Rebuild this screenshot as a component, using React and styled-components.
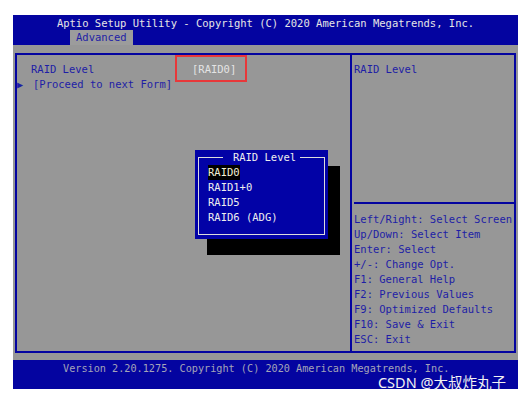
import React from 'react'
import styled, { createGlobalStyle } from 'styled-components'

const Global = createGlobalStyle`
    body {
        margin: 0;
        background: #ffffff;
        font-family: "DejaVu Sans Mono", "Liberation Mono", monospace;
    }
`

const BLUE = '#0404a0'
const GREY = '#979797'
const INK = '#1e1ea6'

const Page = styled.div`
    width: 526px;
    height: 398px;
    padding: 15px 8px 0 13px;
    box-sizing: border-box;
`

const Screen = styled.div`
    width: 505px;
    height: 374px;
    display: flex;
    flex-direction: column;
    background: ${GREY};
    font-size: 10.5px;
    position: relative;
`

const Header = styled.div`
    height: 30px;
    background: ${BLUE};
    display: flex;
    flex-direction: column;
`

Header.Title = styled.div`
    height: 15px;
    line-height: 16px;
    text-align: center;
    color: #e6e6e6;
    white-space: pre;
`

Header.Tabs = styled.div`
    display: flex;
    padding-left: 57px;
    margin-top: auto;
`

const Tab = styled.div`
    height: 15px;
    line-height: 15px;
    padding: 0 6px;
    background: ${props => props.active ? '#9c9c9c' : 'transparent'};
    color: ${props => props.active ? INK : '#e6e6e6'};
`

const Body = styled.div`
    flex: 1;
    padding: 8px 2px 7px 2px;
    display: flex;
`

const Frame = styled.div`
    flex: 1;
    display: flex;
    border: 2px solid ${BLUE};
`

const LeftPanel = styled.div`
    width: 333px;
    border-right: 2px solid ${BLUE};
    padding-top: 7px;
    color: ${INK};
`

const Row = styled.div`
    display: flex;
    height: 15px;
    line-height: 15px;
    white-space: pre;
`

Row.Label = styled.span`
    flex-shrink: 0;
    width: 175px;
    padding-left: ${props => props.indent}px;
    box-sizing: border-box;
`

Row.Value = styled.span`
    position: relative;
    color: #e4e4e4;

    &::after {
        content: '';
        position: absolute;
        left: -17px;
        right: -11px;
        top: -7px;
        bottom: -5px;
        border: 2px solid #e8383a;
    }
`

Row.Marker = styled.span`
    flex-shrink: 0;
    width: 16px;
    font-size: 10px;
    box-sizing: border-box;
`

const RightPanel = styled.div`
    flex: 1;
    display: flex;
    flex-direction: column;
    color: ${INK};
    padding-left: 2px;
`

RightPanel.Top = styled.div`
    height: 140px;
    padding-top: 7px;
    line-height: 15px;
    border-bottom: 2px solid ${BLUE};
`

RightPanel.Help = styled.div`
    padding-top: 8px;
    line-height: 15px;
    white-space: pre;
`

const Footer = styled.div`
    height: 29px;
    background: ${BLUE};
    display: flex;
    flex-direction: column;
`

Footer.Version = styled.div`
    padding: 2px 0 0 50px;
    line-height: 13px;
    font-size: 10.2px;
    color: #a4a4b8;
    white-space: pre;
`

Footer.Mark = styled.div`
    align-self: flex-end;
    padding-right: 12px;
    margin-top: -1px;
    font-family: "Noto Sans", "Noto Sans CJK SC", sans-serif;
    font-size: 14.5px;
    line-height: 17px;
    color: #f2f2f2;
`

const Popup = styled.div`
    position: absolute;
    left: 182px;
    top: 135px;
    width: 133px;
    height: 89px;
    background: #0202a6;
    box-shadow: 12px 16px 0 0 #000000;
    padding: 7px 3px 4px 3px;
    box-sizing: border-box;
    color: #eeeeee;
`

Popup.Box = styled.div`
    height: 100%;
    border: 1px solid #dcdcdc;
    border-top: none;
    box-sizing: border-box;
    display: flex;
    flex-direction: column;
`

Popup.Title = styled.div`
    display: flex;
    align-items: center;
    height: 14px;
    line-height: 14px;
    margin: -7px -1px 0 -1px;

    &::before, &::after {
        content: '';
        flex: 1;
        height: 1px;
        background: #dcdcdc;
    }

    span {
        padding: 0 4px 0 10px;
    }
`

Popup.List = styled.div`
    padding: 1px 0 0 9px;
    display: flex;
    flex-direction: column;
    align-items: flex-start;
`

const Option = styled.div`
    height: 15px;
    line-height: 15px;
    white-space: pre;
    background: ${props => props.selected ? '#000000' : 'transparent'};
    color: ${props => props.selected ? '#f4f2d8' : '#eeeeee'};
`

const helpLines = [
    'Left/Right: Select Screen',
    'Up/Down: Select Item',
    'Enter: Select',
    '+/-: Change Opt.',
    'F1: General Help',
    'F2: Previous Values',
    'F9: Optimized Defaults',
    'F10: Save & Exit',
    'ESC: Exit',
]

const options = ['RAID0', 'RAID1+0', 'RAID5', 'RAID6 (ADG)']

const App = () => {
    return (
        <Page>
            <Global />
            <Screen>
                <Header>
                    <Header.Title>Aptio Setup Utility - Copyright (C) 2020 American Megatrends, Inc.</Header.Title>
                    <Header.Tabs>
                        <Tab active>Advanced</Tab>
                    </Header.Tabs>
                </Header>
                <Body>
                    <Frame>
                        <LeftPanel>
                            <Row>
                                <Row.Label indent={14}>RAID Level</Row.Label>
                                <Row.Value>[RAID0]</Row.Value>
                            </Row>
                            <Row>
                                <Row.Marker>▶</Row.Marker>
                                <span>[Proceed to next Form]</span>
                            </Row>
                        </LeftPanel>
                        <RightPanel>
                            <RightPanel.Top>RAID Level</RightPanel.Top>
                            <RightPanel.Help>
                                {helpLines.map(line => <div key={line}>{line}</div>)}
                            </RightPanel.Help>
                        </RightPanel>
                    </Frame>
                </Body>
                <Footer>
                    <Footer.Version>Version 2.20.1275. Copyright (C) 2020 American Megatrends, Inc.</Footer.Version>
                    <Footer.Mark>CSDN @大叔炸丸子</Footer.Mark>
                </Footer>
                <Popup>
                    <Popup.Box>
                        <Popup.Title><span>RAID Level</span></Popup.Title>
                        <Popup.List>
                            {options.map((opt, i) => (
                                <Option key={opt} selected={i === 0}>{opt}</Option>
                            ))}
                        </Popup.List>
                    </Popup.Box>
                </Popup>
            </Screen>
        </Page>
    )
}

export default App
